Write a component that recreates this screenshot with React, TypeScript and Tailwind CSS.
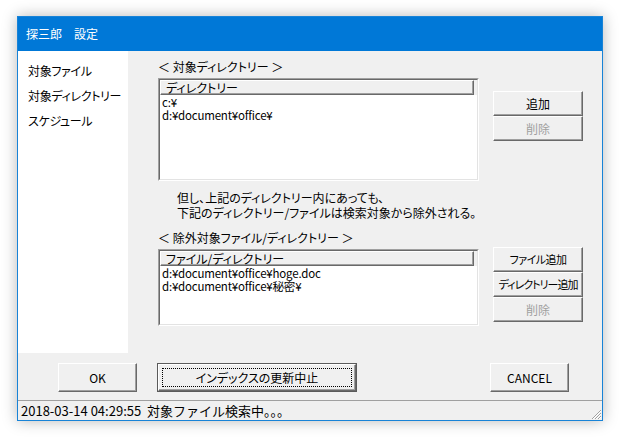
import React from "react"

const raised =
  "border border-t-white border-l-white border-r-[#696969] border-b-[#696969] shadow-[inset_-1px_-1px_0_#a0a0a0] bg-[#f0f0f0]"

function Btn({
  label,
  disabled,
  className,
}: {
  label: string
  disabled?: boolean
  className: string
}) {
  return (
    <div
      className={`flex items-center justify-center whitespace-nowrap ${raised} leading-none ${
        disabled ? "text-[#a0a0a0]" : "text-black"
      } ${className}`}
    >
      {label}
    </div>
  )
}

function ListView({
  header,
  rows,
  height,
}: {
  header: string
  rows: string[]
  height: string
}) {
  return (
    <div
      className={`w-[321px] ${height} border border-t-[#a0a0a0] border-l-[#a0a0a0] border-r-white border-b-white`}
    >
      <div className="flex h-full flex-col border border-t-[#696969] border-l-[#696969] border-r-[#e3e3e3] border-b-[#e3e3e3] bg-white">
        <div className="flex h-[15px] bg-[#f0f0f0]">
          <div className={`flex flex-1 items-center pl-[5px] text-[12px] leading-none ${raised}`}>
            {header}
          </div>
          <div className="w-[3px]" />
        </div>
        <div className="pt-[1px] pl-[2px]">
          {rows.map((r, i) => (
            <div key={i} className="h-[13px] text-[11.5px] leading-[13px] tracking-[-0.2px]">
              {r}
            </div>
          ))}
        </div>
      </div>
    </div>
  )
}

const menu = ["対象ファイル", "対象ディレクトリー", "スケジュール"]

export default function App() {
  return (
    <div className="h-[441px] w-[621px] bg-white pt-[16px] pl-[17px] font-['Noto_Sans_CJK_JP',sans-serif] text-black [font-feature-settings:'palt']">
      <div className="flex h-[405px] w-[586px] flex-col border border-[#1883d7] bg-[#f0f0f0] shadow-[0_0_14px_rgba(0,0,0,0.28)]">
        {/* title */}
        <div className="flex h-[34px] shrink-0 items-center bg-[#0078d7] pl-[8px] text-[12px] text-white">
          探三郎　設定
        </div>

        {/* body */}
        <div className="flex h-[302px] shrink-0">
          <div className="w-[110px] bg-white pt-[7px] pl-[10px]">
            {menu.map((m) => (
              <div key={m} className="h-[25px] text-[12px] leading-[25px] tracking-[-0.3px]">
                {m}
              </div>
            ))}
          </div>

          <div className="flex flex-col pt-[9px] pl-[30px]">
            <div className="flex">
              <div className="flex flex-col">
                <div className="h-[14px] text-[12px] leading-[14px]">＜ 対象ディレクトリー ＞</div>
                <div className="mt-[4px]">
                  <ListView
                    header="ディレクトリー"
                    rows={["c:¥", "d:¥document¥office¥"]}
                    height="h-[103px]"
                  />
                </div>
              </div>
              <div className="mt-[31px] ml-[14px] flex flex-col text-[12px]">
                <Btn label="追加" className="h-[25px] w-[90px]" />
                <Btn label="削除" disabled className="h-[25px] w-[90px]" />
              </div>
            </div>

            <div className="mt-[9px] ml-[19px] text-[12px] leading-[15px]">
              <div>但し、上記のディレクトリー内にあっても、</div>
              <div>下記のディレクトリー/ファイルは検索対象から除外される。</div>
            </div>

            <div className="mt-[11px] flex">
              <div className="flex flex-col">
                <div className="h-[14px] text-[12px] leading-[14px]">
                  ＜ 除外対象ファイル/ディレクトリー ＞
                </div>
                <div className="mt-[4px]">
                  <ListView
                    header="ファイル/ディレクトリー"
                    rows={["d:¥document¥office¥hoge.doc", "d:¥document¥office¥秘密¥"]}
                    height="h-[77px]"
                  />
                </div>
              </div>
              <div className="mt-[16px] ml-[14px] flex flex-col">
                <Btn label="ファイル追加" className="h-[25px] w-[90px] text-[11px] tracking-[-0.5px]" />
                <Btn label="ディレクトリー追加" className="h-[25px] w-[90px] text-[11px] tracking-[-1px]" />
                <Btn label="削除" disabled className="h-[25px] w-[90px] text-[12px]" />
              </div>
            </div>
          </div>
        </div>

        {/* dialog buttons */}
        <div className="flex h-[39px] shrink-0 items-start pt-[10px] pl-[40px] text-[12px]">
          <Btn label="OK" className="h-[29px] w-[79px]" />
          <div className="ml-[20px] h-[29px] w-[200px] border border-[#5a5a5a]">
            <div className={`flex h-full items-center justify-center p-[3px] ${raised}`}>
              <div className="flex h-full w-full items-center justify-center border border-dotted border-black leading-none">
                インデックスの更新中止
              </div>
            </div>
          </div>
          <Btn label="CANCEL" className="ml-[133px] h-[29px] w-[79px]" />
        </div>

        <div className="h-[8px] shrink-0" />

        {/* status bar */}
        <div className="flex flex-1 items-center justify-between border-t border-[#a0a0a0] pl-[3px] [font-feature-settings:normal]">
          <span className="text-[13px] leading-none">
            2018-03-14 04:29:55&nbsp;&nbsp;対象ファイル検索中。。。
          </span>
          <svg width="12" height="12" viewBox="0 0 12 12" className="self-end">
            <path d="M11 2 L2 11 M11 5 L5 11 M11 8 L8 11" stroke="#a0a0a0" strokeWidth="1" />
            <path d="M11 3 L3 11 M11 6 L6 11 M11 9 L9 11" stroke="#ffffff" strokeWidth="1" />
          </svg>
        </div>
      </div>
    </div>
  )
}
